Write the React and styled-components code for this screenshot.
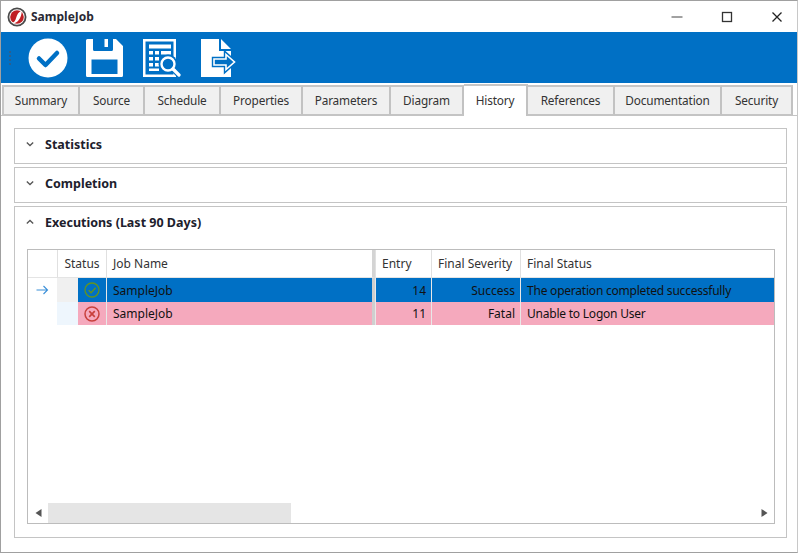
import React from 'react';
import styled, { createGlobalStyle } from 'styled-components';

const GlobalStyle = createGlobalStyle`
  html, body {
    margin: 0;
    padding: 0;
    background: #fff;
  }
  * {
    box-sizing: border-box;
  }
`;

const tabs = [
  { name: 'Summary', width: 78 },
  { name: 'Source', width: 65 },
  { name: 'Schedule', width: 76 },
  { name: 'Properties', width: 82 },
  { name: 'Parameters', width: 88 },
  { name: 'Diagram', width: 73 },
  { name: 'History', width: 64, active: true },
  { name: 'References', width: 87 },
  { name: 'Documentation', width: 107 },
  { name: 'Security', width: 71 },
];

const rows = [
  { id: 1, kind: 'success', job: 'SampleJob', entry: 14, severity: 'Success', status: 'The operation completed successfully', height: 24 },
  { id: 2, kind: 'fatal', job: 'SampleJob', entry: 11, severity: 'Fatal', status: 'Unable to Logon User', height: 23 },
];

const BLUE = '#0070c5';
const ARROW_POINTS = '13,20 25,20 25,15.500 33.500,23 25,30.500 25,26 13,26';

function AppLogo() {
  return (
    <svg width="20" height="20" viewBox="0 0 20 20">
      <circle cx="10" cy="10" r="8.600" fill="#fff" stroke="#4a4a4a" strokeWidth="1.800" />
      <circle cx="10" cy="10" r="6.800" fill="#c01f24" />
      <path d="M14.600 3.800c.4 3.600-1.600 8.600-4.400 10.900-1.500 1.200-3.300 1.700-4.800 1.200 1.800-.6 3-2.700 3.700-5 .9-3 2.300-6 5.500-7.100z" fill="#fff" />
    </svg>
  );
}

function CheckCircleIcon() {
  return (
    <svg width="40" height="40" viewBox="0 0 40 40">
      <circle cx="20" cy="20" r="19.500" fill="#fff" />
      <path d="M11 20.500l6.500 6.500L29 15" fill="none" stroke={BLUE} strokeWidth="4.500" strokeLinecap="round" strokeLinejoin="round" />
    </svg>
  );
}

function SaveIcon() {
  return (
    <svg width="37" height="38" viewBox="0 0 37 38">
      <path fillRule="evenodd" fill="#fff" d="M1.500 0H30l7 7v29.500a1.500 1.500 0 0 1-1.500 1.500h-34A1.500 1.500 0 0 1 0 36.500v-35A1.500 1.500 0 0 1 1.500 0zM7 0v10.500a1.500 1.500 0 0 0 1.500 1.500h17a1.500 1.500 0 0 0 1.500-1.500V0h-5v8h-3.500V0zM5.500 20.500V35h26V20.500z" />
    </svg>
  );
}

function ReportIcon() {
  return (
    <svg width="38" height="38" viewBox="0 0 38 38">
      <path fill="#fff" fillRule="evenodd" d="M0 0h33v38H0zM2.500 2.500v33h28v-33z" />
      <path fill="#fff" d="M6 5.500h22v4H6zM6 12h4v3.500H6zM12 12h4v3.500h-4zM18 12h10v3.500H18zM6 18h4v3.500H6zM12 18h4v3.500h-4zM6 24h4v3.500H6zM12 24h4v3.500h-4zM6 29.500h10V32H6z" />
      <circle cx="25" cy="25" r="9.500" fill={BLUE} />
      <path d="M30 30l8 8-4 0-6-6z" fill={BLUE} />
      <circle cx="25" cy="25" r="6.500" fill="none" stroke="#fff" strokeWidth="2.400" />
      <path d="M30 30l6 6" stroke="#fff" strokeWidth="3.200" strokeLinecap="round" />
    </svg>
  );
}

function ExportIcon() {
  return (
    <svg width="36" height="38" viewBox="0 0 36 38">
      <path fill="#fff" d="M0 0h18v12h12v26H0zM20 0l10 10H20z" />
      <polygon points={ARROW_POINTS} fill={BLUE} stroke={BLUE} strokeWidth="4.400" />
      <polygon points={ARROW_POINTS} fill={BLUE} stroke="#fff" strokeWidth="1.600" />
    </svg>
  );
}

function StatusIcon({ kind }) {
  if (kind === 'success') {
    return (
      <svg width="16" height="16" viewBox="0 0 16 16">
        <circle cx="8" cy="8" r="7" fill="none" stroke="#63941f" strokeWidth="1.300" />
        <path d="M4.600 8.200l2.500 2.500 4.500-5" fill="none" stroke="#63941f" strokeWidth="1.300" />
      </svg>
    );
  }
  return (
    <svg width="16" height="16" viewBox="0 0 16 16">
      <circle cx="8" cy="8" r="7" fill="none" stroke="#c8403c" strokeWidth="1.500" />
      <path d="M5.200 5.200l5.600 5.600M10.800 5.200l-5.600 5.600" stroke="#c8403c" strokeWidth="1.700" />
    </svg>
  );
}

function Chevron({ up }) {
  return (
    <ChevronWrap>
      <svg width="8" height="6" viewBox="0 0 8 6">
        <path d={up ? 'M.8 4.500L4 1.500l3.200 3' : 'M.8 1.500L4 4.500l3.200-3'} fill="none" stroke="#555" strokeWidth="1.300" />
      </svg>
    </ChevronWrap>
  );
}

export default function App() {
  return (
    <Window>
      <GlobalStyle />
      <TitleBar>
        <AppLogo />
        <TitleText>SampleJob</TitleText>
        <WindowButtons>
          <WindowButton>
            <svg width="12" height="12" viewBox="0 0 12 12"><path d="M.5 6h11" stroke="#444" strokeWidth="1" /></svg>
          </WindowButton>
          <WindowButton>
            <svg width="12" height="12" viewBox="0 0 12 12"><rect x="1.500" y="1.500" width="9" height="9" fill="none" stroke="#333" strokeWidth="1.300" /></svg>
          </WindowButton>
          <WindowButton>
            <svg width="12" height="12" viewBox="0 0 12 12"><path d="M1.500 1.500l9 9M10.500 1.500l-9 9" stroke="#222" strokeWidth="1.300" /></svg>
          </WindowButton>
        </WindowButtons>
      </TitleBar>

      <Toolbar>
        <Grip>
          <GripDot />
          <GripDot />
          <GripDot />
          <GripDot />
        </Grip>
        <ToolButton><CheckCircleIcon /></ToolButton>
        <ToolButton><SaveIcon /></ToolButton>
        <ToolButton><ReportIcon /></ToolButton>
        <ToolButton><ExportIcon /></ToolButton>
      </Toolbar>

      <TabStrip>
        {tabs.map((tab) => (
          <Tab key={tab.name} $active={tab.active} style={{ width: tab.width }}>
            {tab.name}
          </Tab>
        ))}
      </TabStrip>

      <TabBody>
        <Section>
          <SectionHeader>
            <Chevron />
            <SectionTitle>Statistics</SectionTitle>
          </SectionHeader>
        </Section>
        <Section>
          <SectionHeader>
            <Chevron />
            <SectionTitle>Completion</SectionTitle>
          </SectionHeader>
        </Section>
        <ExpandedSection>
          <SectionHeader>
            <Chevron up />
            <SectionTitle>Executions (Last 90 Days)</SectionTitle>
          </SectionHeader>
          <GridFrame>
            <GridHeader>
              <HeadCell />
              <HeadCell $center>Status</HeadCell>
              <HeadCell $thick>Job Name</HeadCell>
              <HeadCell>Entry</HeadCell>
              <HeadCell>Final Severity</HeadCell>
              <HeadCell>Final Status</HeadCell>
            </GridHeader>
            {rows.map((row) => (
              <GridRow key={row.id} style={{ height: row.height }}>
                <Indicator>
                  {row.kind === 'success' && (
                    <svg width="13" height="10" viewBox="0 0 13 10">
                      <path d="M.5 5h11M7.500 1l4 4-4 4" fill="none" stroke="#3b8fd8" strokeWidth="1.100" />
                    </svg>
                  )}
                </Indicator>
                <Gutter $kind={row.kind} />
                <IconCell $kind={row.kind}><StatusIcon kind={row.kind} /></IconCell>
                <DataCell $kind={row.kind} $thick>{row.job}</DataCell>
                <DataCell $kind={row.kind} $right>{row.entry}</DataCell>
                <DataCell $kind={row.kind} $right>{row.severity}</DataCell>
                <DataCell $kind={row.kind} $tight>{row.status}</DataCell>
              </GridRow>
            ))}
            <GridSpace />
            <ScrollBar>
              <ScrollArrow>
                <svg width="7" height="8" viewBox="0 0 7 8"><path d="M6.500 0v8L.5 4z" fill="#555" /></svg>
              </ScrollArrow>
              <ScrollTrack>
                <ScrollThumb />
              </ScrollTrack>
              <ScrollArrow>
                <svg width="7" height="8" viewBox="0 0 7 8"><path d="M.5 0v8l6-4z" fill="#555" /></svg>
              </ScrollArrow>
            </ScrollBar>
          </GridFrame>
        </ExpandedSection>
      </TabBody>
    </Window>
  );
}

const Window = styled.div`
  width: 798px;
  height: 553px;
  display: flex;
  flex-direction: column;
  background: #fff;
  border: 1px solid #a0a0a0;
  border-right-color: #c8c8c8;
  font-family: "Noto Sans", "DejaVu Sans", sans-serif;
  font-size: 12px;
  color: #1a1a1a;
  overflow: hidden;
`;

const TitleBar = styled.div`
  height: 31px;
  flex: none;
  display: flex;
  align-items: center;
  padding-left: 6px;
  background: #fff;
`;

const TitleText = styled.span`
  margin-left: 4px;
  font-size: 12px;
  font-weight: 700;
  color: #2a2a35;
`;

const WindowButtons = styled.div`
  margin-left: auto;
  display: flex;
  gap: 10px;
`;

const WindowButton = styled.div`
  width: 40px;
  height: 31px;
  display: flex;
  align-items: center;
  justify-content: center;
`;

const Toolbar = styled.div`
  height: 51px;
  flex: none;
  display: flex;
  align-items: center;
  background: ${BLUE};
  padding-left: 8px;
`;

const Grip = styled.div`
  display: flex;
  flex-direction: column;
  gap: 2px;
  width: 10px;
`;

const GripDot = styled.span`
  width: 2px;
  height: 2px;
  background: #2b5f8f;
`;

const ToolButton = styled.div`
  width: 57px;
  height: 51px;
  display: flex;
  align-items: center;
  justify-content: center;
`;

const TabStrip = styled.div`
  flex: none;
  height: 33px;
  display: flex;
  align-items: flex-end;
  padding-left: 1px;
  border-bottom: 1px solid #c4c4c4;
  background: #fff;
`;

const Tab = styled.div`
  height: ${(props) => (props.$active ? '32px' : '30px')};
  display: flex;
  align-items: center;
  justify-content: center;
  margin-bottom: ${(props) => (props.$active ? '-1px' : '0')};
  padding-bottom: ${(props) => (props.$active ? '3px' : '2px')};
  background: ${(props) => (props.$active ? '#fff' : '#f0f0f0')};
  border-top: 2px solid #c6c6c6;
  border-right: 2px solid #c2c2c2;
  border-bottom: ${(props) => (props.$active ? 'none' : '1px solid #c4c4c4')};
  color: #333;
  font-size: 11.800px;
  letter-spacing: -0.150px;
  z-index: ${(props) => (props.$active ? 1 : 0)};
  &:first-child {
    border-left: 2px solid #c6c6c6;
  }
`;

const TabBody = styled.div`
  flex: 1;
  display: flex;
  flex-direction: column;
  gap: 3px;
  padding: 12px 10px 14px 13px;
  min-height: 0;
`;

const Section = styled.div`
  flex: none;
  height: 36px;
  border: 1px solid #c4c4c4;
  background: #fff;
`;

const ExpandedSection = styled(Section)`
  flex: 1;
  height: auto;
  display: flex;
  flex-direction: column;
  padding-bottom: 13px;
  min-height: 0;
`;

const SectionHeader = styled.div`
  flex: none;
  height: 30px;
  display: flex;
  align-items: center;
  padding-left: 11px;
`;

const ChevronWrap = styled.span`
  width: 19px;
  display: flex;
  align-items: center;
`;

const SectionTitle = styled.span`
  font-size: 12.500px;
  font-weight: 700;
  color: #20202c;
`;

const GridFrame = styled.div`
  flex: 1;
  margin: 12px 11px 0 12px;
  display: flex;
  flex-direction: column;
  border: 1px solid #bcbcbc;
  min-height: 0;
`;

const GridHeader = styled.div`
  flex: none;
  height: 28px;
  display: grid;
  grid-template-columns: 29px 49px 269px 56px 89px 1fr;
`;

const HeadCell = styled.div`
  display: flex;
  align-items: center;
  padding-left: ${(props) => (props.$center ? '0' : '6px')};
  justify-content: ${(props) => (props.$center ? 'center' : 'flex-start')};
  border-left: 1px solid #e0e0e0;
  border-right: ${(props) => (props.$thick ? '3px solid #d4d4d4' : 'none')};
  border-bottom: 1px solid #e4e4e4;
  color: #333;
  &:first-child {
    border-left: none;
  }
`;

const GridRow = styled.div`
  flex: none;
  display: grid;
  grid-template-columns: 29px 21px 28px 269px 56px 89px 1fr;
`;

const rowBackground = (props) => (props.$kind === 'success' ? BLUE : '#f5a9bd');

const Indicator = styled.div`
  display: flex;
  align-items: center;
  justify-content: center;
`;

const Gutter = styled.div`
  background: ${(props) => (props.$kind === 'success' ? '#f0f0f0' : '#eef6fd')};
`;

const IconCell = styled.div`
  display: flex;
  align-items: center;
  justify-content: center;
  background: ${rowBackground};
`;

const DataCell = styled.div`
  display: flex;
  align-items: center;
  justify-content: ${(props) => (props.$right ? 'flex-end' : 'flex-start')};
  padding: ${(props) => (props.$right ? '0 5px 0 0' : '0 0 0 6px')};
  background: ${rowBackground};
  border-left: 1px solid #e8e8e8;
  border-right: ${(props) => (props.$thick ? '3px solid #cfcfcf' : 'none')};
  color: #111;
  letter-spacing: ${(props) => (props.$tight ? '-0.220px' : 'normal')};
  white-space: nowrap;
`;

const GridSpace = styled.div`
  flex: 1;
`;

const ScrollBar = styled.div`
  flex: none;
  height: 20px;
  display: flex;
  align-items: stretch;
`;

const ScrollArrow = styled.div`
  flex: none;
  width: 20px;
  display: flex;
  align-items: center;
  justify-content: center;
`;

const ScrollTrack = styled.div`
  flex: 1;
  display: flex;
`;

const ScrollThumb = styled.div`
  width: 243px;
  background: #e5e5e5;
`;
